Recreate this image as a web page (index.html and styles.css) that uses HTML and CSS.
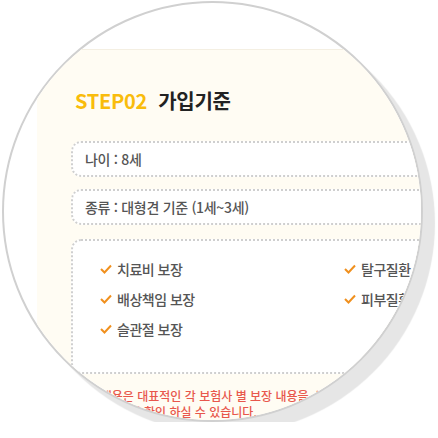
FILE: index.html
```html
<!DOCTYPE html>
<html lang="ko">

<head>
    <meta charset="UTF-8">
    <meta name="viewport" content="width=device-width, initial-scale=1">
    <title>가입기준</title>
    <link rel="stylesheet" href="styles.css">
</head>

<body>

    <div class="lens">
        <div class="card">
            <h2 class="title"><span class="step">STEP02</span> 가입기준</h2>

            <div class="info-box">나이 : 8세</div>
            <div class="info-box">종류 : 대형견 기준 (1세~3세)</div>

            <!-- Coverage list -->
            <div class="cover-box">
                <ul class="cover-list">
                    <li><svg class="check" viewBox="0 0 12 10"><polyline points="1,5 4.5,8.5 11,1.5"/></svg>치료비 보장</li>
                    <li><svg class="check" viewBox="0 0 12 10"><polyline points="1,5 4.5,8.5 11,1.5"/></svg>탈구질환 보장</li>
                    <li><svg class="check" viewBox="0 0 12 10"><polyline points="1,5 4.5,8.5 11,1.5"/></svg>배상책임 보장</li>
                    <li><svg class="check" viewBox="0 0 12 10"><polyline points="1,5 4.5,8.5 11,1.5"/></svg>피부질환 보장</li>
                    <li><svg class="check" viewBox="0 0 12 10"><polyline points="1,5 4.5,8.5 11,1.5"/></svg>슬관절 보장</li>
                </ul>
            </div>

            <p class="notice">※ 위 내용은 대표적인 각 보험사 별 보장 내용을 소개한 것으로 자세한 내용은<br>각 보험사에서 확인 하실 수 있습니다.</p>
        </div>
    </div>

</body>

</html>
```

FILE: styles.css
```css
/* Zoomed lens view */
body {
    margin: 0;
    padding: 0;
    background-color: #fff;
    font-family: "Noto Sans CJK KR", "Noto Sans", sans-serif;
    color: #555;
}

.lens {
    box-sizing: border-box;
    width: 421px;
    height: 421px;
    margin: 1px 0 0 2px;
    border: 2px solid #d0d0d0;
    border-radius: 50%;
    background-color: #fff;
    box-shadow: 12px 12px 1px #e6e6e6;
    overflow: hidden;
}

.card {
    width: 480px;
    height: 420px;
    margin: 46px 0 0 33px;
    padding: 37px 0 0 34px;
    box-sizing: border-box;
    background-color: #fffcf3;
    border-top: 1px solid #f4efe2;
}

.title {
    margin: 0 0 26px 4px;
    font-size: 20px;
    line-height: 28px;
    font-weight: bold;
    color: #222;
    letter-spacing: -0.3px;
}

.step {
    color: #f9bc0c;
    margin-right: 6px;
}

.info-box {
    box-sizing: border-box;
    height: 36px;
    margin-bottom: 12px;
    padding-left: 12px;
    border: 2px dotted #cfcfcf;
    border-radius: 10px;
    background-color: #fff;
    font-size: 14px;
    font-weight: 500;
    line-height: 32px;
    letter-spacing: -0.3px;
}

.cover-box {
    box-sizing: border-box;
    height: 135px;
    margin-top: 14px;
    padding: 13px 0 0 27px;
    border: 2px dotted #cfcfcf;
    border-radius: 10px;
    background-color: #fff;
}

.cover-list {
    display: grid;
    grid-template-columns: 244px 244px;
    margin: 0;
    padding: 0;
    list-style: none;
}

.cover-list li {
    display: flex;
    align-items: center;
    height: 30px;
    font-size: 14px;
    font-weight: 500;
    letter-spacing: -0.5px;
}

.check {
    width: 12px;
    height: 10px;
    margin-right: 5px;
    fill: none;
    stroke: #f0901e;
    stroke-width: 2;
}

.notice {
    margin: 14px 0 0 0;
    font-size: 12px;
    line-height: 16px;
    font-weight: 500;
    color: #e8574c;
    white-space: nowrap;
}
```
